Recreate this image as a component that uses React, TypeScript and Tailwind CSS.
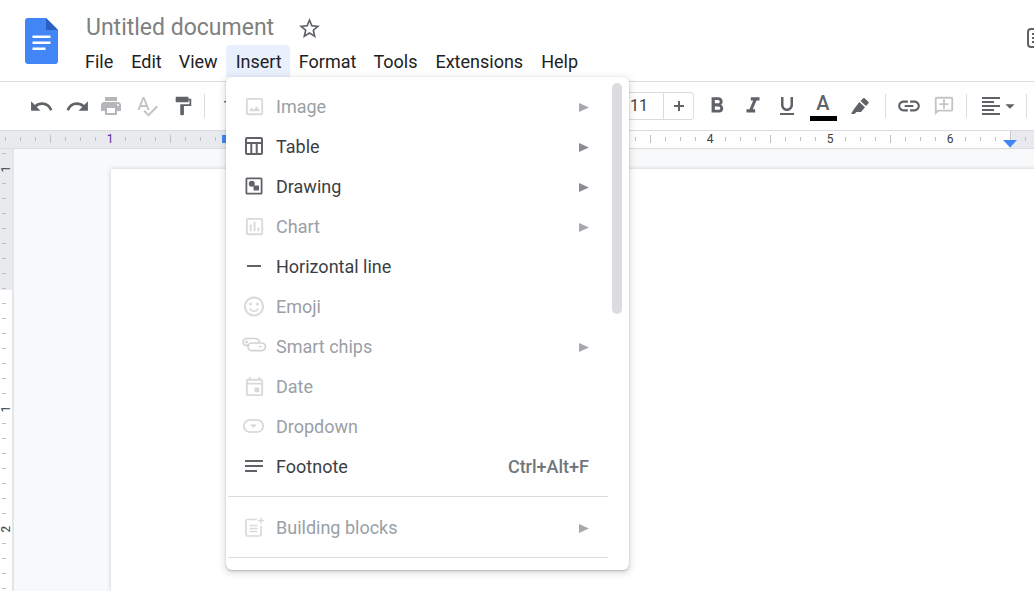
import React from "react";
import {
  MdUndo, MdRedo, MdPrint, MdSpellcheck, MdFormatPaint, MdFormatBold, MdFormatItalic,
  MdFormatUnderlined, MdLink, MdOutlineAddComment, MdFormatAlignLeft, MdArrowDropDown,
  MdStarBorder, MdOutlineImage, MdOutlineInsertChart, MdRemove, MdOutlineSentimentSatisfied,
  MdOutlineEvent, MdNotes,
} from "react-icons/md";

const font = "font-['Roboto',sans-serif]";

function TableIcon() {
  return (
    <svg width="24" height="24" viewBox="0 0 24 24" fill="none" stroke="#5f6368" strokeWidth="2">
      <rect x="4" y="4" width="16" height="16" rx="1" />
      <path d="M4 9h16M9.3 9v11M14.7 9v11" />
    </svg>
  );
}
function DrawingIcon() {
  return (
    <svg width="24" height="24" viewBox="0 0 24 24" fill="#5f6368">
      <path fillRule="evenodd" d="M5 3.500h14A1.500 1.500 0 0 1 20.500 5v14a1.500 1.500 0 0 1-1.500 1.500H5A1.500 1.500 0 0 1 3.500 19V5A1.500 1.500 0 0 1 5 3.500zm.300 1.800v13.400h13.400V5.300z" />
      <circle cx="9.800" cy="9.800" r="3" />
      <rect x="11.500" y="11.500" width="5.500" height="5" />
    </svg>
  );
}
function ChipsIcon() {
  return (
    <svg width="24" height="24" viewBox="0 0 24 24" fill="none" stroke="#cfd2d5" strokeWidth="1.700" className="overflow-visible">
      <path d="M17.500 8.500C17 6 15.500 4.500 13.500 4.500H4.500a3.400 3.400 0 0 0 0 6.800H6" />
      <rect x="6" y="9" width="17.500" height="7.600" rx="3.800" />
      <circle cx="4.500" cy="8" r="1.400" fill="#cfd2d5" stroke="none" />
      <path d="M16.500 12h3.600l-1.800 2z" fill="#cfd2d5" stroke="none" />
    </svg>
  );
}
function DropdownIcon() {
  return (
    <svg width="26" height="24" viewBox="0 0 26 24" fill="none" stroke="#d2d4d7" strokeWidth="1.700">
      <rect x="2" y="5.500" width="21" height="13" rx="6.500" />
      <path d="M8.800 10.500h7l-3.500 3.500z" fill="#d2d4d7" stroke="none" />
    </svg>
  );
}
function BlocksIcon() {
  return (
    <svg width="24" height="24" viewBox="0 0 24 24" fill="none" stroke="#d8dadc" strokeWidth="1.700">
      <path d="M15 4.500H5.500A1.500 1.500 0 0 0 4 6v13.500A1.500 1.500 0 0 0 5.500 21h12a1.500 1.500 0 0 0 1.500-1.500V11" />
      <path d="M7.500 10.500h8M7.500 13.500h8M7.500 16.500h8" strokeWidth="1.400" />
      <path d="M19 2.500v6M16 5.500h6" strokeWidth="1.500" />
    </svg>
  );
}

type Item = { label: string; icon: React.ReactNode; off?: boolean; arrow?: boolean; hint?: string };
const gray = "#d7d9db";
const rows: Item[] = [
  { label: "Image", icon: <MdOutlineImage size={23} color={gray} />, off: true, arrow: true },
  { label: "Table", icon: <TableIcon />, arrow: true },
  { label: "Drawing", icon: <DrawingIcon />, arrow: true },
  { label: "Chart", icon: <MdOutlineInsertChart size={23} color={gray} />, off: true, arrow: true },
  { label: "Horizontal line", icon: <MdRemove size={24} color="#5f6368" /> },
  { label: "Emoji", icon: <MdOutlineSentimentSatisfied size={25} color={gray} />, off: true },
  { label: "Smart chips", icon: <ChipsIcon />, off: true, arrow: true },
  { label: "Date", icon: <MdOutlineEvent size={23} color={gray} />, off: true },
  { label: "Dropdown", icon: <DropdownIcon />, off: true },
  { label: "Footnote", icon: <MdNotes size={24} color="#5f6368" />, hint: "Ctrl+Alt+F" },
];

function Row({ item }: { item: Item }) {
  return (
    <div className="flex h-10 items-center pl-4 pr-[40px]">
      <span className="mb-[2px] flex h-6 w-6 items-center justify-center overflow-visible">{item.icon}</span>
      <span className={`mb-[2px] ml-[10px] flex-1 text-[18px] ${item.off ? "text-[#9aa0a6]" : "text-[#3c4043]"}`}>{item.label}</span>
      {item.arrow && (
        <svg width="10" height="9" viewBox="0 0 10 9">
          <path d="M0 0 10 4.500 0 9z" fill={item.off ? "#a6a9ad" : "#8a8d91"} />
        </svg>
      )}
      {item.hint && <span className="mb-[2px] text-[18px] font-medium text-[#72767b]">{item.hint}</span>}
    </div>
  );
}

function Tool({ children, w = 36 }: { children: React.ReactNode; w?: number }) {
  return (
    <span className="flex h-6 shrink-0 items-center justify-center" style={{ width: w }}>
      {children}
    </span>
  );
}

const hTicks = Array.from({ length: 69 }, (_, i) => 5 + i * 15);

function TopRuler() {
  return (
    <div className="relative h-[19px] shrink-0 overflow-hidden border-y border-[#dadce0] bg-[#e8eaed]">
      <div className="absolute bottom-0 left-[230px] top-0 w-[780px] bg-white" />
      <svg width="1034" height="17" className="absolute left-0 top-0">
        {hTicks.map((x) => {
          const unit = (x - 110) % 120 === 0;
          const half = (x - 170) % 120 === 0;
          if (unit) return null;
          return half ? (
            <rect key={x} x={x} y={4} width={1} height={8} fill="#bdc1c6" />
          ) : (
            <rect key={x} x={x} y={6} width={1} height={4} fill="#bdc1c6" />
          );
        })}
        <rect x={1010} y={0} width={1} height={17} fill="#c8cacd" />
        <path d="M1003 9h14l-7 7.500z" fill="#4285f4" />
        <path d="M222 4h5v8h-5z" fill="#4285f4" />
      </svg>
      {[
        [1, 110],
        [4, 710],
        [5, 830],
        [6, 950],
      ].map(([n, x]) => (
        <span
          key={n}
          style={{ left: x - 6 }}
          className={`absolute top-0 w-3 text-center text-[12px] leading-[17px] ${n === 1 ? "text-[#5a2ca0]" : "text-[#3c4043]"}`}
        >
          {n}
        </span>
      ))}
    </div>
  );
}

const vTicks = Array.from({ length: 30 }, (_, i) => 4 + i * 15);

function SideRuler() {
  return (
    <div className="relative w-[14px] shrink-0 overflow-hidden border-r-2 border-[#e3e5e8] bg-white">
      <div className="absolute left-0 top-0 h-[141px] w-full bg-[#e8eaed]" />
      <svg width="14" height="442" className="absolute left-0 top-0">
        {vTicks.map((y) => {
          const unit = (y - 20) % 120 === 0;
          const half = (y - 80) % 120 === 0;
          if (unit) return null;
          return half ? (
            <rect key={y} x={0} y={y} width={9} height={1} fill="#bdc1c6" />
          ) : (
            <rect key={y} x={2} y={y} width={4} height={1} fill="#bdc1c6" />
          );
        })}
      </svg>
      {[
        ["1", 20],
        ["1", 260],
        ["2", 380],
      ].map(([n, y], i) => (
        <span
          key={i}
          style={{ top: (y as number) - 8 }}
          className="absolute left-0 flex h-4 w-[12px] -rotate-90 items-center justify-center text-[12px] text-[#3c4043]"
        >
          {n}
        </span>
      ))}
    </div>
  );
}

export default function App() {
  const t = "#5f6368";
  return (
    <div className={`${font} relative flex h-[591px] w-[1034px] flex-col overflow-hidden bg-white`}>
      <header className="relative flex h-[82px] shrink-0 border-b border-[#dadce0] pl-[25px]">
        <svg width="33" height="46" viewBox="0 0 33 46" className="mt-[18px]">
          <path d="M3 0h18l12 12v31a3 3 0 0 1-3 3H3a3 3 0 0 1-3-3V3a3 3 0 0 1 3-3z" fill="#4285f4" />
          <path d="M21 0l12 12H21z" fill="#2a5fc4" />
          <path d="M7.500 17.500h18v2.500h-18zM7.500 23.500h18v2.500h-18zM7.500 29.500h13v2.500h-13z" fill="#fff" />
        </svg>
        <div className="ml-[28px] flex flex-col">
          <div className="mt-[14px] flex h-[28px] items-center">
            <span className="text-[23px] leading-7 text-[#80807f]">Untitled document</span>
            <MdStarBorder size={25} color="#5f6368" className="ml-[23px]" />
          </div>
          <nav className="-ml-[11px] mt-[3px] flex h-8 items-center text-[18px] text-[#202124]">
            <span className="px-[10px] py-1">File</span>
            <span className="py-1 pl-2 pr-2">Edit</span>
            <span className="py-1 pl-[9px] pr-2">View</span>
            <span className="h-8 rounded-t-[4px] bg-[#e8f0fe] pl-[10px] pr-2 leading-[33px]">Insert</span>
            <span className="py-1 pl-[9px] pr-2">Format</span>
            <span className="px-[9px] py-1">Tools</span>
            <span className="px-[9px] py-1">Extensions</span>
            <span className="px-[9px] py-1">Help</span>
          </nav>
        </div>
        <svg width="24" height="24" viewBox="0 0 24 24" className="absolute left-[1025px] top-[26px]" fill="none" stroke="#5f6368" strokeWidth="2">
          <rect x="3" y="3" width="18" height="18" rx="3" />
          <path d="M7 8h10M7 12h10M7 16h10" />
        </svg>
      </header>

      <div className="flex h-[48px] shrink-0 items-center pl-[23px]">
        <Tool><MdUndo size={25} color={t} /></Tool>
        <Tool><MdRedo size={25} color={t} /></Tool>
        <Tool w={32}><MdPrint size={24} color="#b4b6b9" /></Tool>
        <span className="ml-[2px]"><Tool w={36}><MdSpellcheck size={24} color="#c2c4c7" /></Tool></span>
        <Tool w={36}><MdFormatPaint size={22} color={t} /></Tool>
        <span className="ml-[3px] h-6 w-px shrink-0 bg-[#dadce0]" />
        <span className="ml-[18px] w-[372px] shrink-0 text-[14px] text-[#3c4043]">1</span>
        <div className="flex h-[28px] w-[99px] shrink-0 items-center rounded-[3px] border border-[#dadce0]">
          <span className="w-[67px] pl-[34px] text-[16px] text-[#3c4043]">11</span>
          <span className="flex h-full flex-1 items-center justify-center border-l border-[#dadce0]">
            <svg width="12" height="12" viewBox="0 0 12 12" fill={t}>
              <path d="M5 1h2v4h4v2H7v4H5V7H1V5h4z" />
            </svg>
          </span>
        </div>
        <span className="ml-[5px]"><Tool><MdFormatBold size={26} color={t} /></Tool></span>
        <Tool><MdFormatItalic size={26} color={t} /></Tool>
        <Tool w={32}><MdFormatUnderlined size={24} color={t} /></Tool>
        <span className="ml-[6px] flex h-[30px] w-[28px] shrink-0 flex-col items-center justify-end">
          <span className="mb-[3px] text-[20px] font-medium leading-[20px] text-[#5f6368]">A</span>
          <span className="h-[5px] w-[27px] bg-black" />
        </span>
        <span className="ml-[9px] flex w-[28px] shrink-0 justify-center">
          <svg width="20" height="18" viewBox="0 0 20 18" fill={t}>
            <path d="M13.200 1.300a1 1 0 0 1 1.400 0l3.900 3.600a1 1 0 0 1 0 1.400L16 9 10.500 4z" />
            <path d="M9.300 5 15 10.200 11 15H6.500L4.500 17H1l2.700-4.500z" />
          </svg>
        </span>
        <span className="ml-[11px] h-6 w-px shrink-0 bg-[#dadce0]" />
        <Tool w={45}><MdLink size={26} color={t} /></Tool>
        <Tool w={25}><MdOutlineAddComment size={22} color="#c3c5c8" className="-scale-x-100" /></Tool>
        <span className="ml-[10px] h-6 w-px shrink-0 bg-[#dadce0]" />
        <span className="ml-[12px] flex w-[42px] shrink-0 items-center">
          <MdFormatAlignLeft size={24} color={t} />
          <MdArrowDropDown size={22} color={t} className="-ml-[4px]" />
        </span>
        <span className="ml-[5px] h-6 w-px shrink-0 bg-[#dadce0]" />
      </div>

      <TopRuler />

      <div className="flex min-h-0 flex-1">
        <SideRuler />
        <main className="flex-1 bg-[#f8f9fa] pl-[97px] pt-[20px]">
          <div className="h-full w-[1000px] bg-white shadow-[0_0_4px_rgba(60,64,67,0.25)]" />
        </main>
      </div>

      <div className="absolute left-[226px] top-[77px] h-[493px] w-[403px] overflow-hidden rounded-[6px] bg-white pt-[10px] shadow-[0_2px_6px_2px_rgba(60,64,67,0.15),0_1px_2px_rgba(60,64,67,0.3)]">
        {rows.map((r) => (
          <Row key={r.label} item={r} />
        ))}
        <div className="mx-[2px] mt-[9px] w-[380px] border-t border-[#dadce0]" />
        <div className="mt-[11px]">
          <Row item={{ label: "Building blocks", icon: <BlocksIcon />, off: true, arrow: true }} />
        </div>
        <div className="mx-[2px] mt-[9px] w-[380px] border-t border-[#dadce0]" />
        <div className="absolute left-[386px] top-[6px] h-[231px] w-[10px] rounded-[5px] bg-[#dadce0]" />
      </div>
    </div>
  );
}
